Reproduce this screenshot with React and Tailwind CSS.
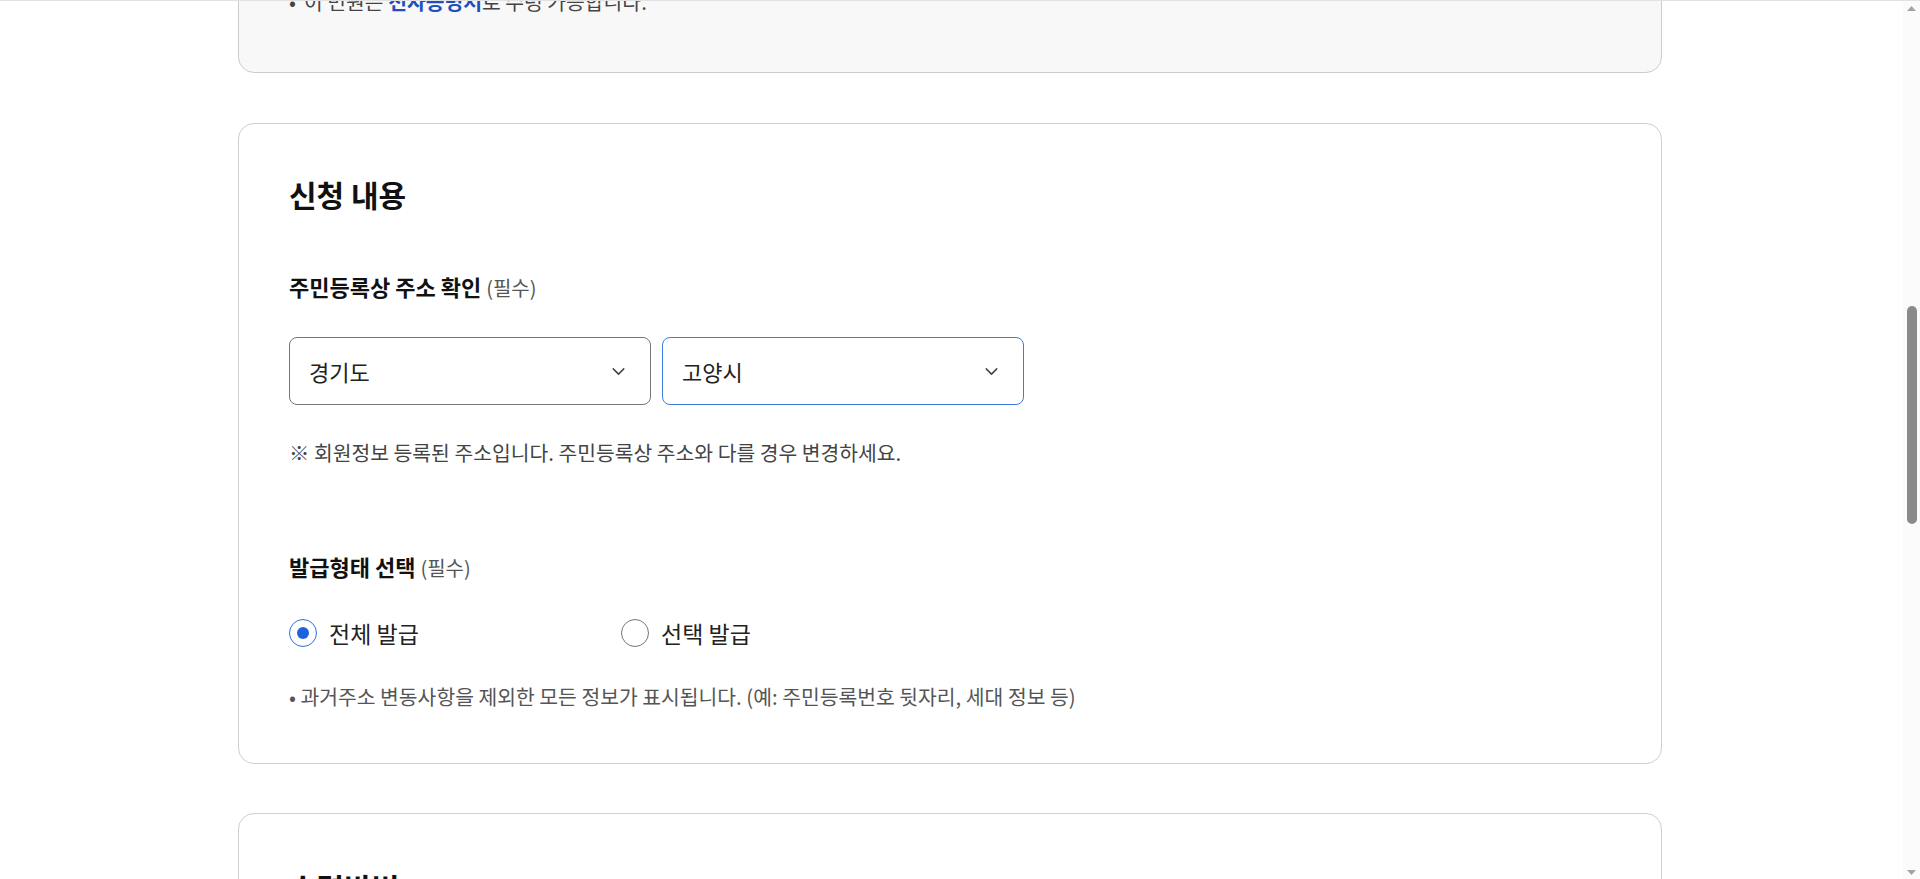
import { ChevronDown } from 'lucide-react';

function Select({ value, focused }) {
  return (
    <div
      className={
        focused
          ? 'flex items-center justify-between w-[362px] h-[68px] pl-[19px] pr-[21px] rounded-[8px] border border-[#3b7ddd] bg-white'
          : 'flex items-center justify-between w-[362px] h-[68px] pl-[19px] pr-[21px] rounded-[8px] border border-[#767676] bg-white'
      }
    >
      <span className="text-[22px] leading-[28px] text-[#222]">{value}</span>
      <ChevronDown className="w-[21px] h-[21px] text-[#444]" strokeWidth={1.7} />
    </div>
  );
}

function Radio({ label, checked }) {
  return (
    <label className="flex items-center gap-[12px] cursor-pointer">
      <span
        className={
          checked
            ? 'flex items-center justify-center w-[28px] h-[28px] rounded-full border-[1.5px] border-[#2f6fe0] bg-white'
            : 'flex items-center justify-center w-[28px] h-[28px] rounded-full border border-[#767676] bg-white'
        }
      >
        {checked && <span className="w-[12px] h-[12px] rounded-full bg-[#1f63dc]" />}
      </span>
      <span className="text-[23px] leading-[30px] text-[#222]">{label}</span>
    </label>
  );
}

function Scrollbar() {
  return (
    <div className="flex flex-col items-center w-[17px] h-[878px] bg-[#fbfbfb]">
      <div className="flex items-center justify-center h-[14px] w-full">
        <svg width="9" height="5" viewBox="0 0 9 5">
          <path d="M0 5 L4.5 0 L9 5 Z" fill="#a3a3a3" />
        </svg>
      </div>
      <div className="h-[291px]" />
      <div className="w-[10px] h-[218px] rounded-full bg-[#8b8b8b]" />
      <div className="flex-1" />
      <div className="flex items-center justify-center h-[14px] w-full">
        <svg width="9" height="5" viewBox="0 0 9 5">
          <path d="M0 0 L9 0 L4.5 5 Z" fill="#a3a3a3" />
        </svg>
      </div>
    </div>
  );
}

export default function App() {
  return (
    <div className="w-[1920px] h-[879px] overflow-hidden bg-white font-['Noto_Sans_CJK_KR','Noto_Sans',sans-serif]">
      <div className="h-px w-full bg-[#e2e2e2]" />
      <div className="flex h-[878px]">
        <div className="flex-1 h-[878px] overflow-hidden">
          <div className="ml-[238px] w-[1424px] -mt-[57px]">
            {/* notice card (scrolled off the top) */}
            <div className="rounded-[16px] border border-[#cccccc] bg-[#f8f8f8] pt-[42px] pb-[57px] px-[50px]">
              <p className="text-[20.4px] leading-[28px] text-[#444]">
                <span className="mr-[8px]">•</span>이 민원은{' '}
                <span className="font-bold text-[#1d4fbf]">전자증명서</span>로 수령 가능합니다.
              </p>
            </div>

            {/* 신청 내용 */}
            <div className="mt-[50px] rounded-[16px] border border-[#cfcfcf] bg-white pt-[51px] pb-[53px] px-[50px]">
              <h2 className="text-[30px] leading-[38px] font-bold text-[#111]">신청 내용</h2>

              <div className="mt-[59px] text-[22px] leading-[28px] font-bold text-[#111]">
                주민등록상 주소 확인{' '}
                <span className="text-[20px] font-normal text-[#555]">(필수)</span>
              </div>

              <div className="mt-[35px] flex gap-[11px]">
                <Select value="경기도" />
                <Select value="고양시" focused />
              </div>

              <p className="mt-[33px] text-[20.4px] leading-[28px] text-[#444]">
                ※ 회원정보 등록된 주소입니다. 주민등록상 주소와 다를 경우 변경하세요.
              </p>

              <div className="mt-[86px] text-[22px] leading-[28px] font-bold text-[#111]">
                발급형태 선택{' '}
                <span className="text-[20px] font-normal text-[#555]">(필수)</span>
              </div>

              <div className="mt-[36px] flex items-center h-[30px]">
                <div className="w-[332px]">
                  <Radio label="전체 발급" checked />
                </div>
                <Radio label="선택 발급" />
              </div>

              <p className="mt-[34px] text-[20.4px] leading-[28px] text-[#555]">
                • 과거주소 변동사항을 제외한 모든 정보가 표시됩니다. (예: 주민등록번호 뒷자리, 세대 정보 등)
              </p>
            </div>

            {/* 수령방법 */}
            <div className="mt-[49px] rounded-[16px] border border-[#cfcfcf] bg-white pt-[54px] pb-[54px] px-[50px]">
              <h2 className="text-[30px] leading-[38px] font-bold text-[#111]">수령방법</h2>
              <div className="h-[200px]" />
            </div>
          </div>
        </div>
        <Scrollbar />
      </div>
    </div>
  );
}
